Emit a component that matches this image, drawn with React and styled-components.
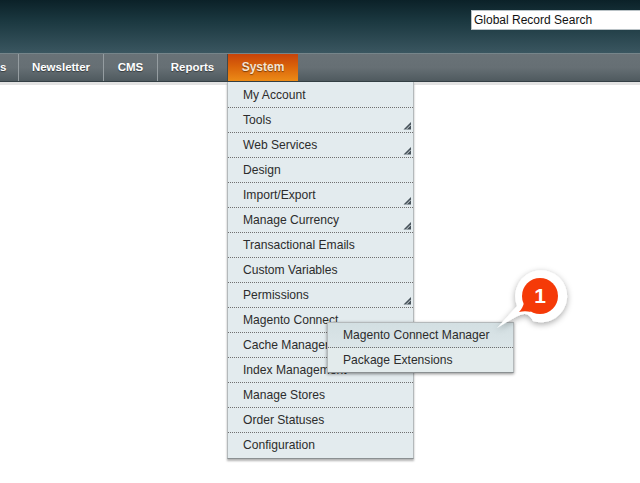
import React from 'react';
import styled, { createGlobalStyle } from 'styled-components';

const GlobalStyle = createGlobalStyle`
  html, body {
    margin: 0;
    padding: 0;
    background: #fff;
    overflow: hidden;
  }
  body {
    font-family: "Liberation Sans", Arial, sans-serif;
  }
`;

const Page = styled.div`
  position: relative;
  width: 640px;
  height: 483px;
  overflow: hidden;
  background: #fff;
`;

const Header = styled.header`
  height: 53px;
  display: flex;
  justify-content: flex-end;
  align-items: flex-start;
  padding-top: 10px;
  box-sizing: border-box;
  background: linear-gradient(to bottom, #0b2128 0%, #1b3840 40%, #3a5660 100%);
`;

const SearchBox = styled.div`
  width: 169px;
  height: 20px;
  box-sizing: border-box;
  background: #fff;
  border: 1px solid #b9c2c6;
  border-right: 0;
  padding-left: 2px;
  font-size: 12px;
  line-height: 18px;
  color: #111;
`;

const NavBar = styled.nav`
  height: 29px;
  display: flex;
  overflow: hidden;
  box-sizing: border-box;
  border-top: 1px solid #76858a;
  background: linear-gradient(to bottom, #697277 0%, #666f74 50%, #4f5a5f 100%);
  border-bottom: 1px solid #333f44;
`;

const NavList = styled.div`
  display: flex;
  margin-left: -69px;
`;

const NavItem = styled.div`
  height: 27px;
  box-sizing: border-box;
  width: ${(p) => p.$width}px;
  text-align: center;
  font-size: 11.5px;
  font-weight: bold;
  line-height: 26px;
  color: #fff;
  text-shadow: 0 1px 1px rgba(0, 0, 0, 0.45);
  border-right: 1px solid ${(p) => p.$divider || '#959da1'};
`;

const ActiveNavItem = styled(NavItem)`
  border-right: 0;
  font-size: 12px;
  color: #f6e3d2;
  background: linear-gradient(to bottom, #c7430a 0%, #d9620a 45%, #ec8b17 100%);
`;

const ContentShadow = styled.div`
  height: 3px;
  background: #e3e3e3;
`;

const Dropdown = styled.div`
  position: absolute;
  width: 187px;
  box-sizing: border-box;
  background: #e3ebee;
  border-left: 1px solid #b4b9bb;
  border-right: 1px solid #b4b9bb;
  border-bottom: 1px solid #8b9092;
  box-shadow: 0 2px 2px rgba(0, 0, 0, 0.3);
  color: #2c2c2c;
`;

const SystemMenu = styled(Dropdown)`
  top: 82px;
  left: 227px;
  z-index: 2;
  padding-top: 1px;
`;

const SubMenu = styled(Dropdown)`
  top: 322px;
  left: 327px;
  z-index: 3;
  border-top: 1px solid #b4b9bb;
  box-shadow: 0 1px 3px rgba(0, 0, 0, 0.45);
  background: #e3ebec;
`;

const MenuItem = styled.div`
  position: relative;
  height: 25px;
  box-sizing: border-box;
  padding-left: 15px;
  font-size: 12.1px;
  line-height: 24px;
  white-space: nowrap;
  border-bottom: ${(p) => (p.$last ? '0' : '1px dotted #707070')};
  background: ${(p) => (p.$highlight ? 'linear-gradient(to bottom, #d3dfe2, #dbe5e8)' : 'transparent')};
`;

const SubMenuLastItem = styled(MenuItem)`
  height: 24px;
`;

const ArrowMark = styled.svg`
  position: absolute;
  right: 1px;
  bottom: 1px;
`;

const Callout = styled.svg`
  position: absolute;
  left: 486px;
  top: 262px;
  z-index: 4;
`;

const ArrowIcon = () => (
  <ArrowMark width="10" height="10" viewBox="0 0 10 10">
    <path d="M9 1 L9 8.5 L1.5 8.5 Z" fill="#47525a" />
    <path d="M4.2 8.5 L9 3.7" stroke="#dfe7ea" strokeWidth="0.9" />
  </ArrowMark>
);

const CalloutBadge = () => (
  <Callout width="90" height="80" viewBox="0 0 90 80">
    <defs>
      <filter id="soft" x="-30%" y="-30%" width="160%" height="160%">
        <feDropShadow dx="0" dy="2" stdDeviation="3" floodColor="#000" floodOpacity="0.35" />
      </filter>
    </defs>
    <path
      d="M11 66 L31 44 A26 26 0 1 1 47 59 C45 55 42 52 39 52 C34 52 28 56 11 66 Z"
      fill="#fff"
      filter="url(#soft)"
    />
    <path d="M33 50 C36 47 37 44 38 41 L45 50 C41 49 37 49 33 50 Z" fill="#f53a08" />
    <circle cx="54" cy="34" r="18" fill="#f53a08" />
    <text x="54" y="41" textAnchor="middle" fontFamily="Liberation Sans, Arial, sans-serif" fontWeight="bold" fontSize="21" fill="#fff">1</text>
  </Callout>
);

const navItems = [
  { label: 'Promotions', width: 88 },
  { label: 'Newsletter', width: 85 },
  { label: 'CMS', width: 54 },
  { label: 'Reports', width: 70, divider: '#3f484c' },
];

const menuItems = [
  { label: 'My Account' },
  { label: 'Tools', arrow: true },
  { label: 'Web Services', arrow: true },
  { label: 'Design' },
  { label: 'Import/Export', arrow: true },
  { label: 'Manage Currency', arrow: true },
  { label: 'Transactional Emails' },
  { label: 'Custom Variables' },
  { label: 'Permissions', arrow: true },
  { label: 'Magento Connect' },
  { label: 'Cache Management' },
  { label: 'Index Management' },
  { label: 'Manage Stores' },
  { label: 'Order Statuses' },
  { label: 'Configuration' },
];

const App = () => {
  return (
    <Page>
      <GlobalStyle />
      <Header>
        <SearchBox>Global Record Search</SearchBox>
      </Header>
      <NavBar>
        <NavList>
          {navItems.map((item) => (
            <NavItem key={item.label} $width={item.width} $divider={item.divider}>
              {item.label}
            </NavItem>
          ))}
          <ActiveNavItem $width={70}>System</ActiveNavItem>
        </NavList>
      </NavBar>
      <ContentShadow />
      <SystemMenu>
        {menuItems.map((item, i) => (
          <MenuItem key={item.label} $last={i === menuItems.length - 1}>
            {item.label}
            {item.arrow && <ArrowIcon />}
          </MenuItem>
        ))}
      </SystemMenu>
      <SubMenu>
        <MenuItem $highlight>Magento Connect Manager</MenuItem>
        <SubMenuLastItem $last>Package Extensions</SubMenuLastItem>
      </SubMenu>
      <CalloutBadge />
    </Page>
  );
};

export default App;
